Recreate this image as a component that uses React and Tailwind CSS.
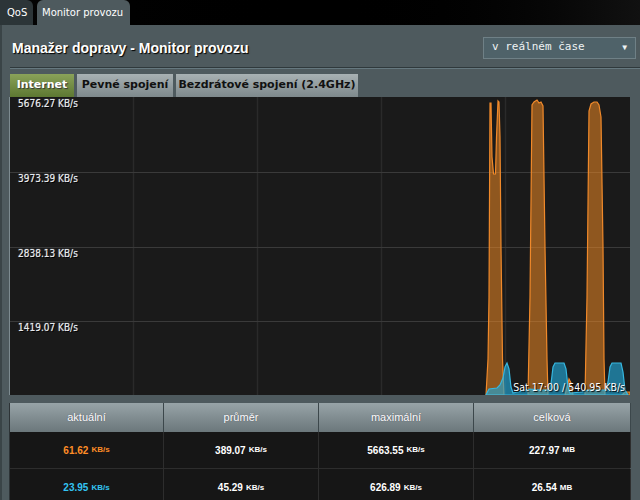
import { useState } from 'react'

const labels = [
  { v: '5676.27 KB/s', y: 'top-[2px]' },
  { v: '3973.39 KB/s', y: 'top-[77px]' },
  { v: '2838.13 KB/s', y: 'top-[152px]' },
  { v: '1419.07 KB/s', y: 'top-[226px]' },
]

function Chart() {
  return (
    <div className="relative w-[621px] h-[298px] bg-[#1a1a1a] border-l border-[#7d8b90]">
      <svg width="620" height="298" className="absolute inset-0">
        {[123, 247, 371, 495].map((x) => (
          <line key={x} x1={x + 0.5} y1="0" x2={x + 0.5} y2="298" stroke="#2a2a2a" strokeWidth="1.5" />
        ))}
        {[75, 150, 224].map((y) => (
          <line key={y} x1="0" y1={y + 0.5} x2="620" y2={y + 0.5} stroke="#3a3a3a" strokeWidth="1" />
        ))}
        <g fill="#f08a24" fillOpacity="0.55" stroke="#f0892a" strokeWidth="1.2">
          <path d="M476,298 L478,262 L479,200 L480,6 L481,6 L482,60 L483.5,77 L485.5,77 L486.5,40 L488,4 L489,5 L490,40 L491,150 L492.5,262 L494,298 Z" />
          <path d="M518,298 L520,200 L522,8 L524,5 L527,3 L529,6 L531,5 L533,9 L535,150 L537,262 L538,298 Z" />
          <path d="M575,298 L577,200 L579,14 L581,7 L584,5 L587,5 L589,8 L591,20 L593,150 L594,262 L595,298 Z" />
          <path d="M555,298 L558,286 L559,282 L561,286 L563,298 Z" />
          <path d="M612,298 L615,295 L620,295 L620,298 Z" />
        </g>
        <g fill="#22a6d6" fillOpacity="0.65" stroke="#36b7e0" strokeWidth="1.2">
          <path d="M476,298 L479,292 L487,291 L490,288 L493,281 L495,270 L497,266 L499,272 L501,290 L503,296 L512,294 L520,292 L530,293 L538,293 L541,287 L543,270 L545,266 L554,266 L556,272 L558,290 L560,296 L572,295 L578,293 L590,293 L596,293 L598,285 L600,270 L602,266 L611,266 L613,275 L615,293 L618,298 Z" />
        </g>
      </svg>
      {labels.map((l) => (
        <div
          key={l.v}
          className={`absolute left-[8px] ${l.y} font-['DejaVu_Sans_Condensed','DejaVu_Sans',sans-serif] text-[10px] leading-none text-[#e6eaee] [text-shadow:1px_1px_0_#000,0_0_1px_#cfd8e0]`}
        >
          {l.v}
        </div>
      ))}
      <div className="absolute right-[5px] bottom-[3px] font-['DejaVu_Sans_Condensed','DejaVu_Sans',sans-serif] text-[10.5px] leading-none text-white [text-shadow:1px_1px_1px_#000]">
        Sat 17:00 / 540.95 KB/s
      </div>
    </div>
  )
}

function Cell({ n, u, color = 'text-white' }) {
  return (
    <div className={`flex items-center justify-center border-r border-[#2d2d2d] font-bold ${color}`}>
      <span className="text-[10px]">{n}</span>
      <span className="ml-[3px] text-[8px]">{u}</span>
    </div>
  )
}

const cols = 'grid grid-cols-[154px_155px_155px_157px]'

function App() {
  const [range, setRange] = useState('v reálném čase')

  return (
    <div className="w-[640px] h-[500px] overflow-hidden bg-black font-['DejaVu_Sans',sans-serif]">
      <div className="h-[25px] flex items-end bg-gradient-to-r from-[#050505] via-[#000] to-[#111]">
        <div className="h-[25px] w-[33px] rounded-tr-[6px] bg-[#2c3538] flex items-center pl-[7px] text-[10px] text-white">QoS</div>
        <div className="ml-[4px] h-[25px] w-[93px] rounded-t-[6px] bg-[#4e5a5e] flex items-center pl-[5px] text-[10px] text-white">Monitor provozu</div>
      </div>

      <div className="h-[475px] bg-[#4e5a5e] border-l-2 border-[#3a4447]">
        <div className="h-[42px] flex items-center justify-between pl-[10px] pr-[4px]">
          <div className="font-['Liberation_Sans',sans-serif] font-bold text-[14px] text-white [text-shadow:1px_1px_1px_#000] mt-[4px]">
            Manažer dopravy - Monitor provozu
          </div>
          <button
            onClick={() => setRange(range)}
            className="w-[153px] h-[22px] mt-[3px] flex items-center justify-between px-[8px] bg-[#4f6269] border border-[#6f8086] text-[11px] text-[#eef2f3] font-['DejaVu_Sans_Mono',monospace]"
          >
            <span>{range}</span>
            <span className="text-[8px]">▼</span>
          </button>
        </div>
        <div className="ml-[8px] border-t border-[#2f393c]" />
        <div className="ml-[8px] border-t border-[#66787f]" />

        <div className="flex gap-[3px] pl-[8px] mt-[5px] h-[23px] text-[11px] font-bold">
          <div className="w-[64px] flex items-center justify-center bg-gradient-to-b from-[#8aa259] to-[#5d7832] text-white [text-shadow:1px_1px_1px_#333]">Internet</div>
          <div className="w-[96px] flex items-center justify-center bg-gradient-to-b from-[#a8b1b3] to-[#7e898c] text-[#111]">Pevné spojení</div>
          <div className="w-[182px] flex items-center justify-center bg-gradient-to-b from-[#a8b1b3] to-[#7e898c] text-[#111]">Bezdrátové spojení (2.4GHz)</div>
        </div>

        <div className="pl-[7px]">
          <Chart />
        </div>

        <div className="mt-[8px] ml-[7px] w-[621px] border-l border-[#2d3336] font-['Liberation_Sans',sans-serif]">
          <div className={`${cols} h-[29px] bg-gradient-to-b from-[#98a4a8] to-[#6b777b] text-[11px] text-white [text-shadow:0_0_1px_#445]`}>
            {['aktuální', 'průměr', 'maximální', 'celková'].map((h) => (
              <div key={h} className="flex items-center justify-center border-r border-[#3c474b]">{h}</div>
            ))}
          </div>
          <div className={`${cols} h-[37px] bg-[#161616] border-b border-[#2d2d2d]`}>
            <Cell n="61.62" u="KB/s" color="text-[#ff8d26]" />
            <Cell n="389.07" u="KB/s" />
            <Cell n="5663.55" u="KB/s" />
            <Cell n="227.97" u="MB" />
          </div>
          <div className={`${cols} h-[37px] bg-[#161616]`}>
            <Cell n="23.95" u="KB/s" color="text-[#33c4f2]" />
            <Cell n="45.29" u="KB/s" />
            <Cell n="626.89" u="KB/s" />
            <Cell n="26.54" u="MB" />
          </div>
        </div>
      </div>
    </div>
  )
}

export default App
